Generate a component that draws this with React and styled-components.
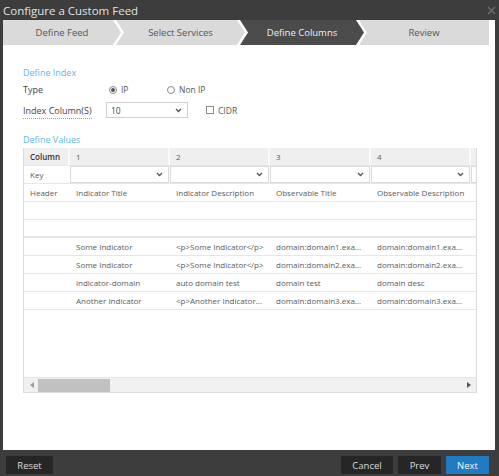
import React from "react";
import styled, { createGlobalStyle, css } from "styled-components";

const GlobalStyle = createGlobalStyle`
  html, body {
    margin: 0;
    padding: 0;
    background: #3c3c3c;
  }
  body {
    font-family: "Open Sans", "Noto Sans", sans-serif;
  }
`;

const Dialog = styled.div`
  width: 499px;
  height: 476px;
  display: flex;
  flex-direction: column;
  background: #3d3d3d;
  overflow: hidden;
`;

const TitleBar = styled.div`
  height: 20px;
  flex: none;
  display: flex;
  align-items: center;
  justify-content: space-between;
  padding: 0 3px 0 3px;
  box-sizing: border-box;
  color: #e2e2e2;
  font-size: 11.5px;
`;

const Body = styled.div`
  flex: 1;
  margin: 0 4px 0 3px;
  background: #fff;
  display: flex;
  flex-direction: column;
`;

const StepBar = styled.div`
  display: flex;
  height: 25px;
  flex: none;
`;

const notchTip = "polygon(0 0, calc(100% - 8px) 0, 100% 50%, calc(100% - 8px) 100%, 0 100%, 8px 50%)";
const tipOnly = "polygon(0 0, calc(100% - 8px) 0, 100% 50%, calc(100% - 8px) 100%, 0 100%)";
const notchOnly = "polygon(0 0, 100% 0, 100% 100%, 0 100%, 8px 50%)";

const Step = styled.div`
  flex: none;
  width: ${(p) => p.$w}px;
  margin-left: ${(p) => p.$ml || 0}px;
  height: 25px;
  display: flex;
  align-items: center;
  justify-content: center;
  font-size: 9.5px;
  background: ${(p) => (p.$active ? "#4b4b4b" : "#dadada")};
  color: ${(p) => (p.$active ? "#f0f0f0" : "#555")};
  clip-path: ${(p) => (p.$shape === "first" ? tipOnly : p.$shape === "last" ? notchOnly : notchTip)};
`;

const Content = styled.div`
  flex: 1;
  display: flex;
  flex-direction: column;
  padding: 22px 0 0 20px;
`;

const SectionLabel = styled.div`
  height: 12px;
  line-height: 12px;
  font-size: 9px;
  color: #5cb8e6;
  margin-top: ${(p) => p.$mt || 0}px;
`;

const FormRow = styled.div`
  display: flex;
  align-items: center;
  height: ${(p) => p.$h}px;
  margin-top: ${(p) => p.$mt}px;
`;

const FieldLabel = styled.div`
  width: 83px;
  flex: none;
  font-size: 9px;
  color: #444;
`;

const Dotted = styled.span`
  border-bottom: 1px dotted #999;
  padding-bottom: 1px;
`;

const RadioGroup = styled.div`
  display: flex;
  padding-left: 3px;
`;

const RadioOption = styled.label`
  width: 58px;
  display: flex;
  align-items: center;
  gap: 4px;
  font-size: 8.5px;
  color: #555;
`;

const RadioCircle = styled.span`
  width: 6px;
  height: 6px;
  border-radius: 50%;
  border: 1px solid #8a8a8a;
  display: flex;
  align-items: center;
  justify-content: center;
  ${(p) =>
    p.$checked &&
    css`
      &::after {
        content: "";
        width: 4px;
        height: 4px;
        border-radius: 50%;
        background: #555;
      }
    `}
`;

const SelectBox = styled.div`
  width: ${(p) => p.$w || 82}px;
  height: 16px;
  box-sizing: border-box;
  border: 1px solid #cfcfcf;
  display: flex;
  align-items: center;
  justify-content: space-between;
  padding: 0 5px 0 4px;
  font-size: 8.5px;
  color: #444;
  background: #fff;
`;

const CheckGroup = styled.label`
  display: flex;
  align-items: center;
  gap: 4px;
  margin-left: 18px;
  font-size: 8.5px;
  color: #555;
`;

const CheckBox = styled.span`
  width: 6px;
  height: 6px;
  border: 1px solid #8a8a8a;
`;

const Table = styled.div`
  width: 454px;
  height: 245px;
  margin-top: 2px;
  box-sizing: border-box;
  border: 1px solid #dcdcdc;
  border-top: none;
  display: flex;
  flex-direction: column;
`;

const Grid = styled.div`
  flex: 1;
  overflow: hidden;
`;

const Row = styled.div`
  display: grid;
  grid-template-columns: 46px 100px 100px 101px 100px 100px;
  height: 18px;
  box-sizing: border-box;
  border-bottom: ${(p) => (p.$thick ? 2 : 1)}px solid #e6e6e6;
  background: ${(p) => (p.$head ? "#efefef" : "#fff")};
`;

const Cell = styled.div`
  padding-left: 6px;
  font-size: 8px;
  line-height: 17px;
  color: ${(p) => (p.$dark ? "#333" : "#5a5a5a")};
  font-weight: ${(p) => (p.$bold ? 600 : 400)};
  white-space: nowrap;
  overflow: hidden;
  ${(p) =>
    p.$head &&
    css`
      border-right: 2px solid #fafafa;
    `}
`;

const KeyCell = styled.div`
  padding-right: 1px;
  display: flex;
  align-items: center;
`;

const KeySelect = styled.div`
  flex: 1;
  height: 17px;
  box-sizing: border-box;
  border: 1px solid #dadada;
  display: flex;
  align-items: center;
  justify-content: flex-end;
  padding-right: 5px;
`;

const ScrollBar = styled.div`
  height: 15px;
  flex: none;
  background: #f0f0f0;
  border-top: 1px solid #e6e6e6;
  box-sizing: border-box;
  display: flex;
  align-items: center;
  padding: 0 5px 0 6px;
`;

const Arrow = styled.span`
  width: 0;
  height: 0;
  border-top: 3px solid transparent;
  border-bottom: 3px solid transparent;
  ${(p) =>
    p.$right
      ? css`
          border-left: 4px solid #555;
          margin-left: auto;
        `
      : css`
          border-right: 4px solid #999;
        `}
`;

const Thumb = styled.span`
  width: 72px;
  height: 13px;
  margin-left: 4px;
  background: #c1c1c1;
`;

const Footer = styled.div`
  height: 26px;
  flex: none;
  display: flex;
  align-items: flex-end;
  padding: 0 10px 2px 6px;
  box-sizing: border-box;
  gap: 5px;
`;

const Button = styled.button`
  width: ${(p) => p.$w}px;
  height: 18px;
  border: none;
  padding: 0;
  font-family: inherit;
  font-size: 9.5px;
  color: ${(p) => (p.$primary ? "#f4f8fc" : "#dcdcdc")};
  background: ${(p) => (p.$primary ? "#1f7bc2" : "#262626")};
  margin-left: ${(p) => (p.$push ? "auto" : "0")};
`;

const Chevron = () => (
  <svg width="7" height="5" viewBox="0 0 7 5">
    <polyline points="1,1 3.5,3.5 6,1" fill="none" stroke="#555" strokeWidth="1.3" />
  </svg>
);

const CloseX = () => (
  <svg width="9" height="9" viewBox="0 0 9 9">
    <path d="M1 1 L8 8 M8 1 L1 8" stroke="#6e6e6e" strokeWidth="1.4" />
  </svg>
);

const rows = [
  ["Some Indicator", "<p>Some Indicator</p>", "domain:domain1.exa...", "domain:domain1.exa..."],
  ["Some Indicator", "<p>Some Indicator</p>", "domain:domain2.exa...", "domain:domain2.exa..."],
  ["indicator-domain", "auto domain test", "domain test", "domain desc"],
  ["Another Indicator", "<p>Another Indicator...", "domain:domain3.exa...", "domain:domain3.exa..."],
];

export default function App() {
  return (
    <Dialog>
      <GlobalStyle />
      <TitleBar>
        <span>Configure a Custom Feed</span>
        <CloseX />
      </TitleBar>
      <Body>
        <StepBar>
          <Step $w={118} $shape="first">Define Feed</Step>
          <Step $w={129} $ml={-5}>Select Services</Step>
          <Step $w={124} $ml={-5} $active>Define Columns</Step>
          <Step $w={130} $ml={-5} $shape="last">Review</Step>
        </StepBar>
        <Content>
          <SectionLabel>Define Index</SectionLabel>
          <FormRow $h={13} $mt={4}>
            <FieldLabel>Type</FieldLabel>
            <RadioGroup>
              <RadioOption>
                <RadioCircle $checked />
                IP
              </RadioOption>
              <RadioOption>
                <RadioCircle />
                Non IP
              </RadioOption>
            </RadioGroup>
          </FormRow>
          <FormRow $h={16} $mt={6}>
            <FieldLabel>
              <Dotted>Index Column(S)</Dotted>
            </FieldLabel>
            <SelectBox>
              10
              <Chevron />
            </SelectBox>
            <CheckGroup>
              <CheckBox />
              CIDR
            </CheckGroup>
          </FormRow>
          <SectionLabel $mt={16}>Define Values</SectionLabel>
          <Table>
            <Grid>
              <Row $head>
                <Cell $head $bold $dark>Column</Cell>
                <Cell $head>1</Cell>
                <Cell $head>2</Cell>
                <Cell $head>3</Cell>
                <Cell $head>4</Cell>
                <Cell $head />
              </Row>
              <Row>
                <Cell>Key</Cell>
                {[1, 2, 3, 4, 5].map((n) => (
                  <KeyCell key={n}>
                    <KeySelect>
                      <Chevron />
                    </KeySelect>
                  </KeyCell>
                ))}
              </Row>
              <Row>
                <Cell>Header</Cell>
                <Cell>Indicator Title</Cell>
                <Cell>Indicator Description</Cell>
                <Cell>Observable Title</Cell>
                <Cell>Observable Description</Cell>
                <Cell />
              </Row>
              <Row />
              <Row $thick />
              {rows.map((r, i) => (
                <Row key={i}>
                  <Cell />
                  {r.map((t, j) => (
                    <Cell key={j}>{t}</Cell>
                  ))}
                  <Cell />
                </Row>
              ))}
            </Grid>
            <ScrollBar>
              <Arrow />
              <Thumb />
              <Arrow $right />
            </ScrollBar>
          </Table>
        </Content>
      </Body>
      <Footer>
        <Button $w={47}>Reset</Button>
        <Button $w={52} $push>Cancel</Button>
        <Button $w={43}>Prev</Button>
        <Button $w={43} $primary>Next</Button>
      </Footer>
    </Dialog>
  );
}
